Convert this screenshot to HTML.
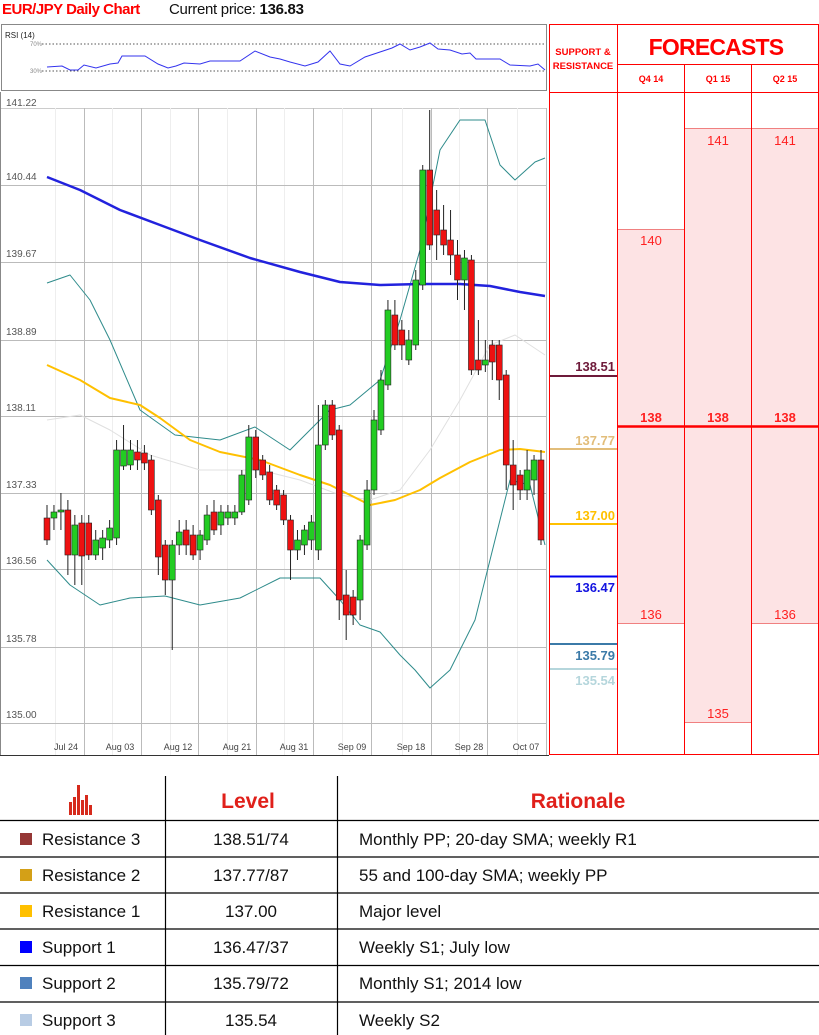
<!DOCTYPE html>
<html><head><meta charset="utf-8"><style>
body{margin:0;width:819px;height:1035px;background:#fff;overflow:hidden;font-family:"Liberation Sans",sans-serif;position:relative}
.abs{position:absolute}
</style></head><body>
<div class="abs" style="left:2px;top:1px;font-size:15px;font-weight:bold;color:#ff0000;letter-spacing:-0.5px">EUR/JPY Daily Chart</div>
<div class="abs" style="left:169px;top:1px;font-size:15px;color:#111;letter-spacing:-0.3px">Current price: <b>136.83</b></div>
<svg id="s" class="abs" style="left:0;top:0" width="819" height="1035" xmlns="http://www.w3.org/2000/svg" font-family="Liberation Sans, sans-serif">
<rect x="1.5" y="24.5" width="545" height="66" fill="#fff" stroke="#888"/>
<text x="5" y="38" font-size="8" fill="#222">RSI (14)</text>
<line x1="42" y1="44" x2="545" y2="44" stroke="#555" stroke-dasharray="1.5,2"/>
<line x1="42" y1="71" x2="545" y2="71" stroke="#555" stroke-dasharray="1.5,2"/>
<text x="30" y="46" font-size="6" fill="#888">70%</text>
<text x="30" y="73" font-size="6" fill="#888">30%</text>
<polyline fill="none" stroke="#3333ee" stroke-width="1" points="47,67 62,66 70,70 78,70 84,65 96,68 110,64 118,63 122,56 145,56 158,64 168,68 176,66 184,63 200,64 210,61 222,61 240,61 255,51 270,57 280,59 290,62 305,66 318,62 330,51 340,64 350,66 365,57 380,52 392,48 400,44 410,50 420,47 430,43 438,49 450,50 462,54 470,53 476,59 490,59 500,59 510,65 530,66 538,64 545,70"/>
<g id="grid"></g>
<g id="ind"></g>
<g id="candles"></g>
<g id="labs"></g>
<line x1="0" y1="755.5" x2="549" y2="755.5" stroke="#333" stroke-width="1"/>
<rect x="617.5" y="229" width="67" height="394" fill="#fde3e4"/>
<rect x="684.5" y="128" width="67" height="595" fill="#fde3e4"/>
<rect x="751.5" y="128" width="67.5" height="495" fill="#fde3e4"/>
<line x1="617.5" y1="229.5" x2="684.5" y2="229.5" stroke="#f08080"/>
<line x1="684.5" y1="128.5" x2="819" y2="128.5" stroke="#f08080"/>
<line x1="617.5" y1="623.5" x2="684.5" y2="623.5" stroke="#f08080"/>
<line x1="751.5" y1="623.5" x2="819" y2="623.5" stroke="#f08080"/>
<line x1="684.5" y1="722.5" x2="751.5" y2="722.5" stroke="#f08080"/>
<g stroke="#ff0000" stroke-width="1" fill="none">
<rect x="549.5" y="24.5" width="269" height="730"/>
<line x1="617.5" y1="24" x2="617.5" y2="755"/>
<line x1="617.5" y1="64.5" x2="819" y2="64.5"/>
<line x1="549.5" y1="92.5" x2="819" y2="92.5"/>
<line x1="684.5" y1="64" x2="684.5" y2="755"/>
<line x1="751.5" y1="64" x2="751.5" y2="755"/>
</g>
<text x="583" y="55" font-size="9.5" font-weight="bold" fill="#ff0000" text-anchor="middle">SUPPORT &amp;</text>
<text x="583" y="69" font-size="9.5" font-weight="bold" fill="#ff0000" text-anchor="middle">RESISTANCE</text>
<text x="716" y="55" font-size="23" font-weight="bold" fill="#ff0000" text-anchor="middle" letter-spacing="-0.8">FORECASTS</text>
<text x="651" y="82" font-size="9" font-weight="bold" fill="#ff0000" text-anchor="middle">Q4 14</text>
<text x="718" y="82" font-size="9" font-weight="bold" fill="#ff0000" text-anchor="middle">Q1 15</text>
<text x="785" y="82" font-size="9" font-weight="bold" fill="#ff0000" text-anchor="middle">Q2 15</text>
<line x1="617.5" y1="426.5" x2="819" y2="426.5" stroke="#ff0000" stroke-width="2.5"/>
<g font-size="13" fill="#ff2020" text-anchor="middle">
<text x="651" y="245">140</text><text x="718" y="145">141</text><text x="785" y="145">141</text>
<text x="651" y="422" font-weight="bold">138</text><text x="718" y="422" font-weight="bold">138</text><text x="785" y="422" font-weight="bold">138</text>
<text x="651" y="619">136</text><text x="785" y="619">136</text><text x="718" y="718">135</text>
</g>
<g font-size="13" font-weight="bold" text-anchor="end">
<line x1="550" y1="376" x2="617" y2="376" stroke="#6e1a3a" stroke-width="2"/><text x="615" y="371" fill="#6e1a3a">138.51</text>
<line x1="550" y1="449" x2="617" y2="449" stroke="#e2bd7a" stroke-width="2"/><text x="615" y="445" fill="#e2bd7a">137.77</text>
<line x1="550" y1="524" x2="617" y2="524" stroke="#ffc000" stroke-width="2"/><text x="615" y="520" fill="#ffc000">137.00</text>
<line x1="550" y1="576.5" x2="617" y2="576.5" stroke="#0000ee" stroke-width="2"/><text x="615" y="592" fill="#1515e0">136.47</text>
<line x1="550" y1="644" x2="617" y2="644" stroke="#3b7aa8" stroke-width="2"/><text x="615" y="660" fill="#3b7aa8">135.79</text>
<line x1="550" y1="669" x2="617" y2="669" stroke="#b5d6dc" stroke-width="2"/><text x="615" y="685" fill="#b5d6dc">135.54</text>
</g>
<g stroke="#000" stroke-width="1.2">
<line x1="165.5" y1="776" x2="165.5" y2="1035"/>
<line x1="337.5" y1="776" x2="337.5" y2="1035"/>
<line x1="0" y1="820.5" x2="819" y2="820.5"/>
<line x1="0" y1="857" x2="819" y2="857"/>
<line x1="0" y1="893" x2="819" y2="893"/>
<line x1="0" y1="929" x2="819" y2="929"/>
<line x1="0" y1="965.5" x2="819" y2="965.5"/>
<line x1="0" y1="1002" x2="819" y2="1002"/>
</g>
<g fill="#d62a1c">
<rect x="69" y="802" width="3" height="13"/><rect x="73" y="797" width="3" height="18"/><rect x="77" y="785" width="3" height="30"/><rect x="81" y="800" width="3" height="15"/><rect x="85" y="795" width="3" height="20"/><rect x="89" y="805" width="3" height="10"/>
</g>
<text x="248" y="808" font-size="21" font-weight="bold" fill="#e0201a" text-anchor="middle">Level</text>
<text x="578" y="808" font-size="21" font-weight="bold" fill="#e0201a" text-anchor="middle">Rationale</text>
<g font-size="17" fill="#111">
<rect x="20" y="833" width="12" height="12" fill="#953735"/><text x="42" y="845">Resistance 3</text><text x="251" y="845" text-anchor="middle">138.51/74</text><text x="359" y="845">Monthly PP; 20-day SMA; weekly R1</text>
<rect x="20" y="869" width="12" height="12" fill="#d4a017"/><text x="42" y="881">Resistance 2</text><text x="251" y="881" text-anchor="middle">137.77/87</text><text x="359" y="881">55 and 100-day SMA; weekly PP</text>
<rect x="20" y="905" width="12" height="12" fill="#ffc000"/><text x="42" y="917">Resistance 1</text><text x="251" y="917" text-anchor="middle">137.00</text><text x="359" y="917">Major level</text>
<rect x="20" y="941" width="12" height="12" fill="#0000ff"/><text x="42" y="953">Support 1</text><text x="251" y="953" text-anchor="middle">136.47/37</text><text x="359" y="953">Weekly S1; July low</text>
<rect x="20" y="977" width="12" height="12" fill="#4f81bd"/><text x="42" y="989">Support 2</text><text x="251" y="989" text-anchor="middle">135.79/72</text><text x="359" y="989">Monthly S1; 2014 low</text>
<rect x="20" y="1014" width="12" height="12" fill="#b8cce4"/><text x="42" y="1026">Support 3</text><text x="251" y="1026" text-anchor="middle">135.54</text><text x="359" y="1026">Weekly S2</text>
</g>
</svg>
<script>
var NS="http://www.w3.org/2000/svg";
function el(p,t,a){var e=document.createElementNS(NS,t);for(var k in a)e.setAttribute(k,a[k]);document.getElementById(p).appendChild(e);return e;}
var hy=[185,262,340,416,493,569,647,723],lab=["140.44","139.67","138.89","138.11","137.33","136.56","135.78","135.00"];
el("grid","line",{x1:0,y1:108.5,x2:547,y2:108.5,stroke:"#ccc"});
[55,112,170,227,284,342,402,459,517].forEach(function(x){el("grid","line",{x1:x+.5,y1:108,x2:x+.5,y2:755,stroke:"#eee"});});
hy.forEach(function(y){el("grid","line",{x1:0,y1:y+.5,x2:547,y2:y+.5,stroke:"#bbb"});});
[84,141,198,256,313,371,431,487,546].forEach(function(x){el("grid","line",{x1:x+.5,y1:108,x2:x+.5,y2:755,stroke:"#bbb"});});
var t0=el("labs","text",{x:6,y:106,"font-size":10,fill:"#555"});t0.textContent="141.22";
hy.forEach(function(y,i){var t=el("labs","text",{x:6,y:y-5,"font-size":10,fill:"#555"});t.textContent=lab[i];});
var xl=[["Jul 24",66],["Aug 03",120],["Aug 12",178],["Aug 21",237],["Aug 31",294],["Sep 09",352],["Sep 18",411],["Sep 28",469],["Oct 07",526]];
xl.forEach(function(a){var t=el("labs","text",{x:a[1],y:750,"font-size":9,fill:"#444","text-anchor":"middle"});t.textContent=a[0];});
el("grid","line",{x1:0.5,y1:92,x2:0.5,y2:755,stroke:"#888"});
function pl(pts,c,w){el("ind","polyline",{points:pts,fill:"none",stroke:c,"stroke-width":w,"stroke-linejoin":"round"});}
pl("47,420 80,415 110,430 150,455 200,470 260,470 300,480 340,495 370,500 400,490 430,450 460,400 490,345 515,335 545,355","#e0e0e0",1);
pl("47,283 70,275 90,300 110,340 140,410 175,435 220,440 255,427 290,450 330,410 350,405 380,380 400,320 420,250 440,150 460,120 485,120 500,165 515,180 535,162 545,158","#2e8b8b",1);
pl("47,560 70,585 100,605 130,598 165,596 200,605 240,598 280,578 320,578 340,600 360,625 380,632 400,655 415,670 430,688 450,670 475,620 490,560 510,480 530,485 545,545","#2e8b8b",1);
pl("47,177 80,190 120,210 160,225 200,240 250,258 300,272 340,282 380,285 420,284 460,284 490,286 520,292 545,296","#2222dd",2.5);
pl("47,365 80,380 110,398 140,405 160,418 190,440 220,452 260,460 300,475 330,485 350,495 370,505 395,500 420,490 440,478 470,462 500,450 520,449 545,452","#ffc000",2);
var c=[[518,540,505,545],[518,512,505,530],[512,510,493,530],[510,555,500,575],[555,525,515,585],[523,556,515,585],[523,555,515,560],[555,540,530,560],[548,538,530,560],[540,528,520,548],[538,450,440,545],[466,450,425,470],[465,450,440,470],[452,460,440,470],[453,463,445,470],[460,510,455,515],[500,557,495,575],[545,580,540,595],[580,545,540,650],[545,532,520,555],[530,545,520,555],[535,555,525,560],[550,535,530,560],[540,515,505,545],[512,530,500,535],[525,512,505,535],[518,512,505,525],[518,512,505,525],[512,475,470,515],[500,437,425,505],[437,470,430,478],[460,475,455,480],[472,500,465,505],[490,505,485,510],[495,520,490,525],[520,550,515,580],[550,540,530,560],[545,530,525,555],[540,522,515,550],[550,445,405,560],[445,405,400,450],[405,435,400,440],[430,600,425,620],[595,615,570,640],[597,615,590,625],[600,540,535,620],[545,490,480,550],[490,420,410,495],[430,380,370,435],[385,310,300,390],[315,345,300,350],[330,345,320,360],[360,340,330,365],[345,280,270,350],[285,170,165,290],[170,245,110,250],[210,235,190,260],[230,245,205,255],[240,255,210,275],[255,280,240,300],[280,258,250,310],[260,370,255,375],[360,370,320,375],[365,360,340,372],[345,362,340,380],[345,380,340,400],[375,465,370,490],[465,485,440,510],[475,490,470,500],[490,470,450,500],[480,460,455,495],[460,540,450,545]];
var n=c.length,x0=47,x1=541,dx=(x1-x0)/(n-1),bw=dx*0.85;
c.forEach(function(d,i){var x=x0+i*dx,up=d[1]<d[0],top=Math.min(d[0],d[1]),h=Math.max(2,Math.abs(d[0]-d[1]));
el("candles","line",{x1:x,y1:d[2],x2:x,y2:d[3],stroke:"#222","stroke-width":1});
el("candles","rect",{x:x-bw/2,y:top,width:bw,height:h,fill:up?"#22cc22":"#ee1111",stroke:"#222","stroke-width":0.6});});
</script>
</body></html>
